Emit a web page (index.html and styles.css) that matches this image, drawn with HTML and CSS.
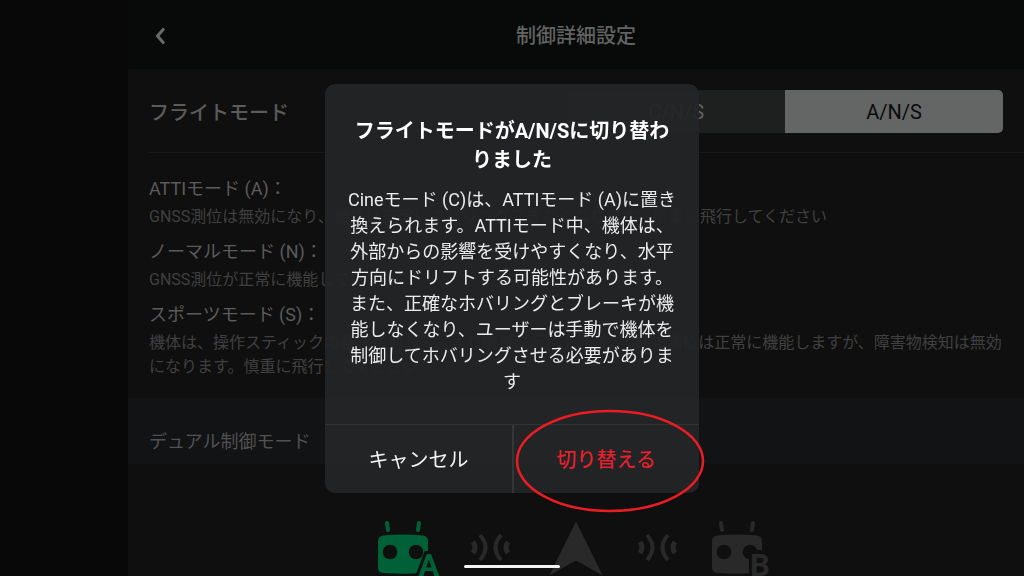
FILE: index.html
```html
<!DOCTYPE html>
<html lang="ja">
<head>
<meta charset="utf-8">
<meta name="viewport" content="width=device-width, initial-scale=1">
<title>制御詳細設定</title>
<link rel="stylesheet" href="styles.css">
</head>
<body>
<div class="app">
  <header class="header">
    <button class="back" type="button" aria-label="戻る">
      <svg width="12" height="20" viewBox="0 0 12 20"><path d="M10 2.500L3.500 10L10 17.500"/></svg>
    </button>
    <h1 class="header-title">制御詳細設定</h1>
  </header>
  <main class="content">
    <section class="mode-row">
      <h2 class="mode-title">フライトモード</h2>
      <div class="segment">
        <button class="segment-item" type="button" aria-pressed="false">C/N/S</button>
        <button class="segment-item selected" type="button" aria-pressed="true">A/N/S</button>
      </div>
    </section>
    <dl class="modes">
      <dt>ATTIモード (A)：</dt>
      <dd>GNSS測位は無効になり、機体は正確にホバリングできなくなります。慎重に飛行してください</dd>
      <dt>ノーマルモード (N)：</dt>
      <dd>GNSS測位が正常に機能しています</dd>
      <dt>スポーツモード (S)：</dt>
      <dd>機体は、操作スティックの動きに対して、より敏感に反応します。GNSS測位は正常に機能しますが、障害物検知は無効になります。慎重に飛行してください</dd>
    </dl>
    <h2 class="band">デュアル制御モード</h2>
    <div class="devices">
      <svg class="robot robot-a" width="62" height="56" viewBox="0 0 62 56">
        <path class="antenna" d="M9 3l1 7M41 3l-1 7"/>
        <path class="shape" d="M5 15.500Q25 13.500 45 15.500Q50 16.500 50 21V48Q50 52.500 45 53Q25 54.500 5 53Q0 52.500 0 48V21Q0 16.500 5 15.500Z"/>
        <circle class="hole" cx="12" cy="32" r="7.300"/><circle class="hole" cx="38" cy="32" r="7.300"/>
        <text class="letter" x="51" y="56">A</text>
      </svg>
      <svg class="signal" width="41" height="56" viewBox="0 0 41 56">
        <path d="M10 15Q21 27.500 10 40M31 15Q20 27.500 31 40"/>
        <path class="near" d="M3 22Q7 27.500 3 33M38 22Q34 27.500 38 33"/>
      </svg>
      <svg class="arrow" width="66" height="56" viewBox="0 0 66 56"><path d="M35 1.500L61.700 55.500L35 40.500L8.300 55.500Z"/></svg>
      <svg class="signal" width="41" height="56" viewBox="0 0 41 56">
        <path d="M10 15Q21 27.500 10 40M31 15Q20 27.500 31 40"/>
        <path class="near" d="M3 22Q7 27.500 3 33M38 22Q34 27.500 38 33"/>
      </svg>
      <svg class="robot robot-b" width="62" height="56" viewBox="-4 0 62 56">
        <path class="antenna" d="M9 3l1 7M41 3l-1 7"/>
        <path class="shape" d="M5 15.500Q25 13.500 45 15.500Q50 16.500 50 21V48Q50 52.500 45 53Q25 54.500 5 53Q0 52.500 0 48V21Q0 16.500 5 15.500Z"/>
        <circle class="hole" cx="12" cy="32" r="7.300"/><circle class="hole" cx="38" cy="32" r="7.300"/>
        <path class="hole" d="M37 30H60V56H37Z"/>
        <text class="letter" x="48" y="56">B</text>
      </svg>
    </div>
  </main>
</div>
<div class="overlay">
  <div class="dialog" role="dialog" aria-modal="true" aria-labelledby="dialog-title">
    <div class="dialog-body">
      <h2 class="dialog-title" id="dialog-title">フライトモードがA/N/Sに切り替わりました</h2>
      <p class="dialog-text">Cineモード (C)は、ATTIモード (A)に置き換えられます。ATTIモード中、機体は、外部からの影響を受けやすくなり、水平方向にドリフトする可能性があります。また、正確なホバリングとブレーキが機能しなくなり、ユーザーは手動で機体を制御してホバリングさせる必要があります</p>
    </div>
    <div class="actions">
      <button class="action" type="button">キャンセル</button>
      <button class="action confirm" type="button">切り替える
        <svg class="ring" width="190" height="104" viewBox="0 0 190 104"><ellipse cx="95" cy="52" rx="93" ry="50"/></svg>
      </button>
    </div>
  </div>
</div>
<div class="home-bar"></div>
</body>
</html>
```

FILE: styles.css
```css
* { box-sizing: border-box; }
body, h1, h2, p, dl, dd { margin: 0; }
body {
  background: #080808;
  font-family: Roboto, "Noto Sans CJK JP", sans-serif;
}
button {
  margin: 0;
  padding: 0;
  border: 0;
  background: none;
  font: inherit;
  color: inherit;
}
.app {
  height: 100vh;
  padding-left: 12.5%;
  overflow: hidden;
}
.header {
  display: grid;
  grid-template-columns: 64px 1fr 64px;
  align-items: center;
  height: 69px;
  padding-top: 2px;
  background: #080a09;
}
.back {
  display: flex;
  justify-content: center;
}
.back path {
  fill: none;
  stroke: #696a6a;
  stroke-width: 3;
}
.header-title {
  color: #626363;
  font-size: 20px;
  font-weight: 500;
  line-height: 28px;
  text-align: center;
}
.content {
  min-height: 100%;
  background: #0f0f0f;
}
.mode-row {
  display: flex;
  align-items: center;
  justify-content: space-between;
  height: 84px;
  margin-left: 21px;
  padding: 2px 21px 0 0;
  border-bottom: 1px solid #1a1a1a;
}
.mode-title {
  color: #5b5b5b;
  font-size: 20px;
  font-weight: 500;
}
.segment {
  display: grid;
  grid-template-columns: 1fr 1fr;
  width: 51%;
  height: 43px;
  border-radius: 5px;
  overflow: hidden;
  background: #1e201f;
  color: #606161;
  font-size: 20px;
}
.selected {
  background: #646565;
  color: #0a0b0b;
}
.modes {
  padding: 23px 16px 19px 21px;
}
.modes dt {
  margin-bottom: 3px;
  color: #5b5b5b;
  font-size: 18px;
  line-height: 26px;
}
.modes dd {
  margin-bottom: 10px;
  color: #404040;
  font-size: 16px;
  line-height: 24px;
}
.modes dd:last-child { margin-bottom: 0; }
.band {
  padding: 31px 21px 9px;
  background: #121315;
  color: #515151;
  font-size: 18px;
  font-weight: 400;
  line-height: 26px;
}
.devices {
  display: flex;
  justify-content: center;
  gap: 30px;
  padding: 56px 4px 0 0;
}
.devices svg { flex: none; }
.robot .antenna {
  fill: none;
  stroke-width: 4;
  stroke-linecap: round;
}
.robot .hole { fill: #0f0f0f; }
.robot .letter {
  font-size: 31px;
  font-weight: 700;
  text-anchor: middle;
  stroke: #0f0f0f;
  stroke-width: 6;
  paint-order: stroke;
}
.robot-a .shape, .robot-a .letter { fill: #006139; }
.robot-a .antenna { stroke: #006139; }
.robot-b .shape, .robot-b .letter { fill: #292929; }
.robot-b .antenna { stroke: #292929; }
.signal path {
  fill: none;
  stroke: #292929;
  stroke-width: 4;
}
.signal .near { stroke-width: 5; }
.arrow path { fill: #292929; }
.overlay {
  position: fixed;
  inset: 0;
  display: flex;
  align-items: center;
  justify-content: center;
}
.dialog {
  width: 374px;
  max-width: 100%;
  border-radius: 10px;
  background: rgba(36, 37, 39, 0.95);
}
.dialog-body {
  padding: 33px 23px 29px;
  text-align: center;
}
.dialog-title {
  color: #fff;
  font-size: 20px;
  font-weight: 700;
  line-height: 29px;
}
.dialog-text {
  margin-top: 12px;
  color: #ececec;
  font-size: 18px;
  line-height: 26px;
}
.actions {
  display: grid;
  grid-template-columns: 1fr 1fr;
  border-top: 1px solid #323335;
}
.action {
  position: relative;
  height: 68px;
  color: #f4f4f4;
  font-size: 20px;
}
.confirm {
  border-left: 2px solid #353638;
  color: #e5212e;
  font-weight: 500;
}
.ring {
  position: absolute;
  top: -16px;
  left: 1px;
  overflow: visible;
}
.ring ellipse {
  fill: none;
  stroke: #ec1c24;
  stroke-width: 2.500;
}
.home-bar {
  position: fixed;
  bottom: 8px;
  left: 50%;
  width: 96px;
  height: 3px;
  margin-left: -48px;
  border-radius: 2px;
  background: #f4f4f4;
}
```
